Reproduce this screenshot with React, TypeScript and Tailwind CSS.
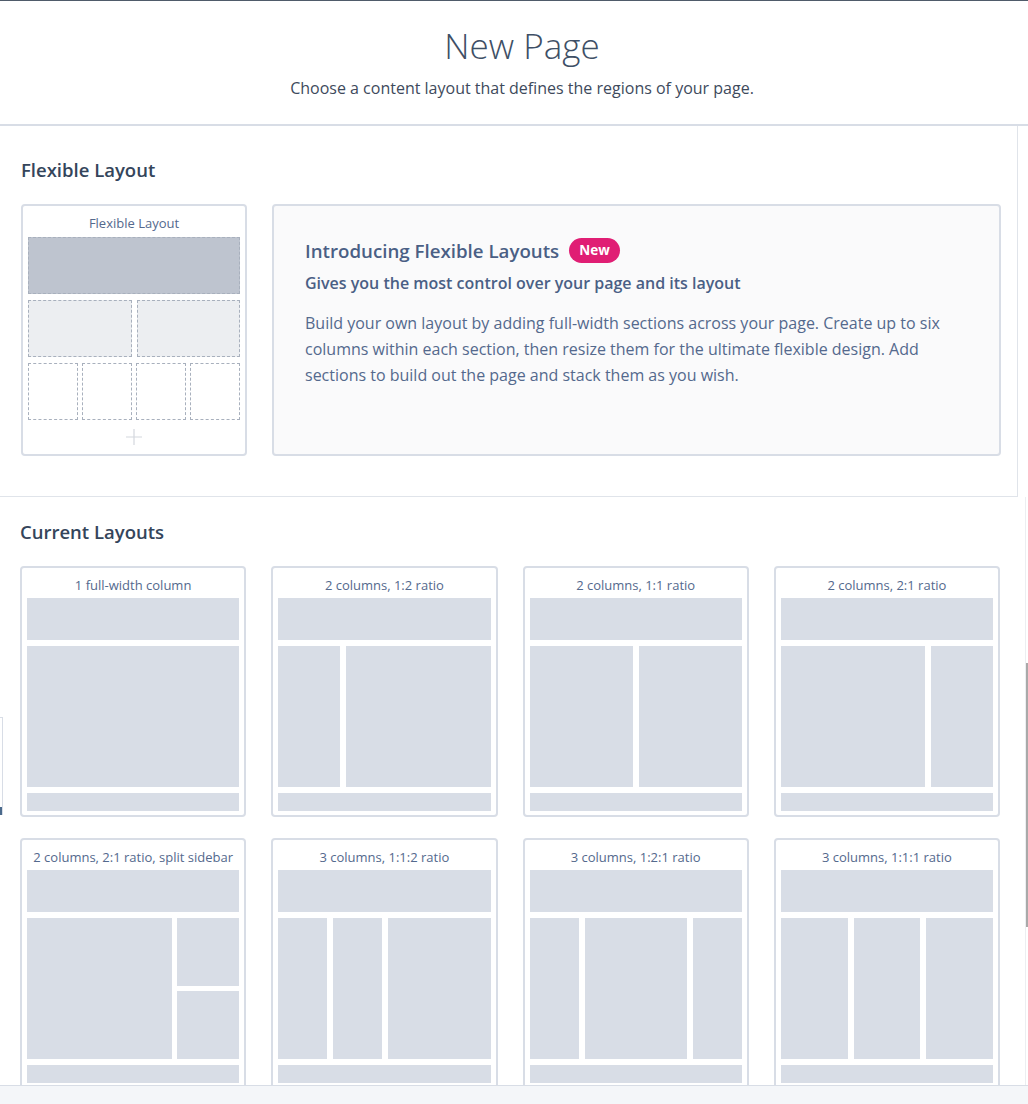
import React from "react";

const block = "bg-[#d8dde6]";

type Cols = { kind: "one" } | { kind: "cols"; widths: string[] } | { kind: "split" };

const layouts: { title: string; cols: Cols }[] = [
  { title: "1 full-width column", cols: { kind: "one" } },
  { title: "2 columns, 1:2 ratio", cols: { kind: "cols", widths: ["w-[62px]", "flex-1"] } },
  { title: "2 columns, 1:1 ratio", cols: { kind: "cols", widths: ["flex-1", "flex-1"] } },
  { title: "2 columns, 2:1 ratio", cols: { kind: "cols", widths: ["flex-1", "w-[62px]"] } },
  { title: "2 columns, 2:1 ratio, split sidebar", cols: { kind: "split" } },
  { title: "3 columns, 1:1:2 ratio", cols: { kind: "cols", widths: ["w-[49px]", "w-[49px]", "flex-1"] } },
  { title: "3 columns, 1:2:1 ratio", cols: { kind: "cols", widths: ["w-[49px]", "flex-1", "w-[49px]"] } },
  { title: "3 columns, 1:1:1 ratio", cols: { kind: "cols", widths: ["flex-1", "flex-1", "flex-1"] } },
];

function Middle({ cols }: { cols: Cols }) {
  if (cols.kind === "one") return <div className={`h-[141px] ${block}`} />;
  if (cols.kind === "split")
    return (
      <div className="flex h-[141px] gap-[5px]">
        <div className={`flex-1 ${block}`} />
        <div className="flex w-[62px] flex-col gap-[5px]">
          <div className={`flex-1 ${block}`} />
          <div className={`flex-1 ${block}`} />
        </div>
      </div>
    );
  return (
    <div className="flex h-[141px] gap-[6px]">
      {cols.widths.map((w, i) => (
        <div key={i} className={`${w} ${block}`} />
      ))}
    </div>
  );
}

function LayoutCard({ title, cols }: { title: string; cols: Cols }) {
  return (
    <div className="rounded-[4px] border-2 border-[#d8dde6] bg-white px-[5px] pt-[9px] pb-[4px]">
      <div className="text-center text-[13px] leading-4 text-[#54698d]">{title}</div>
      <div className="mt-[5px] flex flex-col gap-[6px]">
        <div className={`h-[42px] ${block}`} />
        <Middle cols={cols} />
        <div className={`h-[18px] ${block}`} />
      </div>
    </div>
  );
}

function FlexibleCard() {
  const dash = "border border-dashed border-[#a8b0bd]";
  return (
    <div className="w-[226px] shrink-0 rounded-[4px] border-2 border-[#d8dde6] bg-white px-[5px] pt-[9px]">
      <div className="text-center text-[13px] leading-4 text-[#54698d]">Flexible Layout</div>
      <div className="mt-[6px] flex flex-col gap-[6px]">
        <div className={`h-[57px] bg-[#bec4cf] ${dash}`} />
        <div className="flex h-[57px] gap-[5px]">
          <div className={`flex-1 bg-[#eceef1] ${dash}`} />
          <div className={`flex-1 bg-[#eceef1] ${dash}`} />
        </div>
        <div className="flex h-[57px] gap-[4px]">
          <div className={`flex-1 ${dash}`} />
          <div className={`flex-1 ${dash}`} />
          <div className={`flex-1 ${dash}`} />
          <div className={`flex-1 ${dash}`} />
        </div>
      </div>
      <div className="flex h-[34px] items-center justify-center">
        <svg width="20" height="20" viewBox="0 0 20 20" stroke="#d4d8de" strokeWidth="1.2">
          <path d="M10 2v16M2 10h16" />
        </svg>
      </div>
    </div>
  );
}

export default function App() {
  return (
    <div
      className="relative flex h-[1104px] flex-col overflow-hidden bg-white"
      style={{ fontFamily: '"Open Sans", "Liberation Sans", sans-serif' }}
    >
      <div className="h-px bg-[#4f5b6a]" />

      {/* Header */}
      <header className="border-b-2 border-[#d8dde6] pt-[25px] pb-[26px] pl-[16px] text-center">
        <h1 className="text-[35px] leading-10 font-light text-[#3e4f66]">New Page</h1>
        <p className="mt-[12px] text-[16px] leading-5 text-[#3e4a5c]">
          Choose a content layout that defines the regions of your page.
        </p>
      </header>

      <main className="flex-1 overflow-hidden">
        {/* Flexible layout */}
        <section className="w-[1018px] border-r border-b border-[#e0e4ea] pt-[32px] pb-[40px] pl-[21px]">
          <h2 className="text-[18.5px] leading-6 font-semibold text-[#34455b]">Flexible Layout</h2>
          <div className="mt-[22px] flex w-[980px] gap-[25px]">
            <FlexibleCard />
            <div className="flex-1 rounded-[4px] border-2 border-[#d8dde6] bg-[#fafafb] px-[31px] pt-[32px]">
              <div className="flex items-center gap-[10px]">
                <h3 className="text-[18.7px] leading-6 font-semibold text-[#4a5f85]">
                  Introducing Flexible Layouts
                </h3>
                <span className="rounded-full bg-[#e01e74] px-[10px] text-[13.5px] leading-[25px] font-bold text-white">
                  New
                </span>
              </div>
              <p className="mt-[10px] text-[16px] leading-5 font-semibold text-[#4a5f85]">
                Gives you the most control over your page and its layout
              </p>
              <p className="mt-[17px] text-[16px] leading-[26px] text-[#54698d]">
                Build your own layout by adding full-width sections across your page. Create up to six
                columns within each section, then resize them for the ultimate flexible design. Add
                sections to build out the page and stack them as you wish.
              </p>
            </div>
          </div>
        </section>

        {/* Current layouts */}
        <section className="w-[1026px] border-r border-[#eceef1] pt-[23px] pl-[20px]">
          <h2 className="text-[18.5px] leading-6 font-semibold text-[#34455b]">Current Layouts</h2>
          <div className="mt-[22px] grid w-[980px] grid-cols-4 gap-x-[25px] gap-y-[21px]">
            {layouts.map((l) => (
              <LayoutCard key={l.title} title={l.title} cols={l.cols} />
            ))}
          </div>
        </section>
      </main>

      <footer className="h-[19px] border-t border-[#d8dde6] bg-[#f4f6f9]" />

      {/* scrollbar thumb */}
      <div className="absolute top-[663px] right-0 h-[264px] w-[2px] bg-[#a9a9a9]" />
      {/* stray edge element */}
      <div className="absolute top-[717px] left-0 flex h-[98px] w-[3px] flex-col border-t border-r border-[#d8dde6]">
        <div className="flex-1" />
        <div className="h-[8px] bg-[#4b6a8c]" />
      </div>
    </div>
  );
}
